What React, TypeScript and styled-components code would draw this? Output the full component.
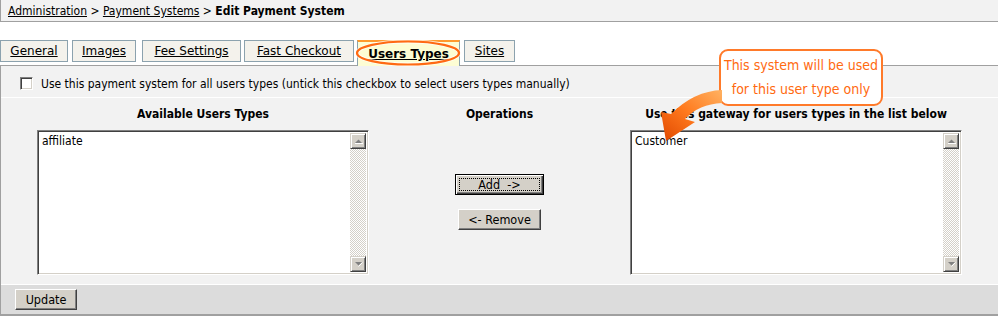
import React from "react";
import styled, { createGlobalStyle, css } from "styled-components";

const FONT = `"DejaVu Sans Condensed", "DejaVu Sans", Tahoma, sans-serif`;
const WIDE = `"DejaVu Sans", Verdana, sans-serif`;

const Global = createGlobalStyle`
  html, body { margin: 0; padding: 0; background: #ffffff; }
  body { font-family: ${FONT}; font-size: 12px; color: #000; }
  * { box-sizing: border-box; }
`;

const Page = styled.div`
  position: relative;
  width: 998px;
  height: 319px;
  overflow: hidden;
`;

const Breadcrumb = styled.div`
  height: 22px;
  background: #f2f2f2;
  border-left: 1px solid #a0a0a0;
  border-bottom: 1px solid #a0a0a0;
  padding: 4px 0 0 7px;
  font-size: 12px;
  white-space: pre;
`;

const Crumb = styled.span`
  text-decoration: underline;
`;

const Current = styled.b`
  font-weight: bold;
`;

const Tabs = styled.div`
  display: flex;
  align-items: flex-end;
  margin-top: 18px;
  height: 26px;
  gap: 4px;
`;

const Tab = styled.div<{ $active?: boolean; $w: number; $ml?: number }>`
  position: relative;
  width: ${(p) => p.$w}px;
  margin-left: ${(p) => p.$ml ?? 0}px;
  height: 22px;
  align-self: flex-start;
  background: #f4f2ec;
  border: 1px solid #8ca2ae;
  text-align: center;
  line-height: 21px;
  font-family: ${WIDE};
  font-size: 12px;
  text-decoration: underline;
  white-space: nowrap;
  ${(p) =>
    p.$active &&
    css`
      height: 26px;
      background: #fdfdd4;
      border-top: 2px solid #ff9a2e;
      border-bottom: none;
      font-weight: bold;
      line-height: 25px;
      z-index: 1;
    `}
`;

const Ring = styled.svg`
  position: absolute;
  left: -3px;
  top: -4px;
  overflow: visible;
`;

const Panel = styled.div`
  border-top: 1px solid #a0a0a0;
  border-left: 1px solid #a0a0a0;
  background: #f2f2f2;
  margin-top: -1px;
`;

const CheckRow = styled.label`
  display: flex;
  align-items: center;
  height: 32px;
  padding: 4px 0 0 19px;
  gap: 8px;
  border-bottom: 1px solid #ffffff;
  font-size: 12px;
`;

const Box = styled.span`
  width: 13px;
  height: 13px;
  margin-top: -1px;
  background: #fff;
  border-top: 1px solid #808080;
  border-left: 1px solid #808080;
  border-right: 1px solid #ffffff;
  border-bottom: 1px solid #ffffff;
  box-shadow: inset 1px 1px 0 #404040, inset -1px -1px 0 #d4d0c8;
`;

const Columns = styled.div`
  display: grid;
  grid-template-columns: 332px 1fr 332px;
  padding: 0 36px 0 36px;
  height: 187px;
  border-bottom: 1px solid #ffffff;
`;

const Column = styled.div`
  display: flex;
  flex-direction: column;
  align-items: center;
`;

const Heading = styled.div`
  font-weight: bold;
  font-size: 12px;
  height: 32px;
  padding-top: 9px;
  white-space: nowrap;
`;

const ListBox = styled.div`
  width: 332px;
  height: 145px;
  background: #fff;
  border-top: 1px solid #808080;
  border-left: 1px solid #808080;
  border-right: 1px solid #ffffff;
  border-bottom: 1px solid #ffffff;
  box-shadow: inset 1px 1px 0 #404040, inset -1px -1px 0 #d4d0c8;
  padding: 2px;
  display: flex;
`;

const Options = styled.div`
  flex: 1;
  padding: 1px 0 0 2px;
  font-size: 12px;
`;

const Scroll = styled.div`
  width: 16px;
  display: flex;
  flex-direction: column;
  justify-content: space-between;
  background: repeating-conic-gradient(#d4d0c8 0 25%, #ffffff 0 50%) 0 0 / 2px 2px;
`;

const ScrollBtn = styled.div`
  width: 16px;
  height: 16px;
  background: #d4d0c8;
  border-top: 1px solid #d4d0c8;
  border-left: 1px solid #d4d0c8;
  border-right: 1px solid #404040;
  border-bottom: 1px solid #404040;
  box-shadow: inset 1px 1px 0 #ffffff, inset -1px -1px 0 #808080;
  display: flex;
  align-items: center;
  justify-content: center;
`;

const Ops = styled.div`
  display: flex;
  flex-direction: column;
  align-items: center;
  gap: 14px;
  padding-top: 44px;
`;

const Button = styled.button<{ $default?: boolean; $w: number }>`
  width: ${(p) => p.$w}px;
  height: 21px;
  padding: 0;
  font-family: ${FONT};
  font-size: 12.5px;
  color: #000;
  background: #d4d0c8;
  border-top: 1px solid #ffffff;
  border-left: 1px solid #ffffff;
  border-right: 1px solid #404040;
  border-bottom: 1px solid #404040;
  box-shadow: inset -1px -1px 0 #808080;
  white-space: pre;
  ${(p) =>
    p.$default &&
    css`
      border: 1px solid #000;
      box-shadow: inset 1px 1px 0 #ffffff, inset -1px -1px 0 #404040, inset -2px -2px 0 #808080;
      outline: 1px dotted #000;
      outline-offset: -5px;
    `}
`;

const Footer = styled.div`
  height: 31px;
  background: #dcdcdc;
  border-bottom: 2px solid #a0a0a0;
  padding: 4px 0 0 14px;
`;

const Callout = styled.div`
  position: absolute;
  left: 719px;
  top: 49px;
  width: 164px;
  height: 57px;
  background: #ffffff;
  border: 2px solid #ff7a2a;
  border-radius: 9px;
  color: #ff6a10;
  font-size: 14px;
  line-height: 24px;
  text-align: center;
  padding-top: 2px;
  font-family: ${FONT};
  white-space: nowrap;
`;

const Arrow = styled.svg`
  position: absolute;
  left: 650px;
  top: 85px;
`;

function Arrowhead({ down }: { down?: boolean }) {
  return (
    <svg width="9" height="6" viewBox="0 0 9 6">
      {down ? (
        <>
          <path d="M1 1 H8 L4.5 4.5 Z" fill="#808080" />
          <path d="M4.5 5.5 L8.5 1.5" stroke="#ffffff" strokeWidth="1" />
        </>
      ) : (
        <>
          <path d="M1 5 H8 L4.5 1.5 Z" fill="#808080" />
          <path d="M1 5.5 H9" stroke="#ffffff" strokeWidth="1" />
        </>
      )}
    </svg>
  );
}

function List({ items }: { items: string[] }) {
  return (
    <ListBox>
      <Options>
        {items.map((i) => (
          <div key={i}>{i}</div>
        ))}
      </Options>
      <Scroll>
        <ScrollBtn>
          <Arrowhead />
        </ScrollBtn>
        <ScrollBtn>
          <Arrowhead down />
        </ScrollBtn>
      </Scroll>
    </ListBox>
  );
}

const tabs = [
  { label: "General", w: 68 },
  { label: "Images", w: 64 },
  { label: "Fee Settings", w: 99, ml: 2 },
  { label: "Fast Checkout", w: 110, ml: -1 },
  { label: "Users Types", w: 103, active: true, ml: -1 },
  { label: "Sites", w: 51 },
];

export default function App() {
  return (
    <Page>
      <Global />
      <Breadcrumb>
        <Crumb>Administration</Crumb>
        {" > "}
        <Crumb>Payment Systems</Crumb>
        {" > "}
        <Current>Edit Payment System</Current>
      </Breadcrumb>
      <Tabs>
        {tabs.map((t) => (
          <Tab key={t.label} $w={t.w} $active={t.active} $ml={t.ml}>
            {t.label}
            {t.active && (
              <Ring width="108" height="28" viewBox="0 0 108 28">
                <ellipse cx="53" cy="15" rx="51" ry="11.5" fill="none" stroke="#ffffff" strokeWidth="4" opacity="0.7" />
                <ellipse cx="53" cy="15" rx="51" ry="11.5" fill="none" stroke="#ff6a13" strokeWidth="2.2" />
              </Ring>
            )}
          </Tab>
        ))}
      </Tabs>
      <Panel>
        <CheckRow>
          <Box />
          Use this payment system for all users types (untick this checkbox to select users types manually)
        </CheckRow>
        <Columns>
          <Column>
            <Heading>Available Users Types</Heading>
            <List items={["affiliate"]} />
          </Column>
          <Column>
            <Heading>Operations</Heading>
            <Ops>
              <Button $default $w={89}>{"Add  ->"}</Button>
              <Button $w={83}>{"<- Remove"}</Button>
            </Ops>
          </Column>
          <Column>
            <Heading>Use this gateway for users types in the list below</Heading>
            <List items={["Customer"]} />
          </Column>
        </Columns>
        <Footer>
          <Button $w={62}>Update</Button>
        </Footer>
      </Panel>
      <Callout>
        This system will be used
        <br />
        for this user type only
      </Callout>
      <Arrow width="80" height="60" viewBox="0 0 80 60">
        <defs>
          <linearGradient id="ag" x1="1" y1="0" x2="0" y2="1">
            <stop offset="0" stopColor="#ffb262" />
            <stop offset="0.5" stopColor="#ff7a1e" />
            <stop offset="1" stopColor="#e04800" />
          </linearGradient>
        </defs>
        <path
          d="M72 5 Q44 6 21 29 L11 27 L16 56 L45 37 L35 34 Q49 19 72 18 Z"
          fill="url(#ag)"
        />
      </Arrow>
    </Page>
  );
}
